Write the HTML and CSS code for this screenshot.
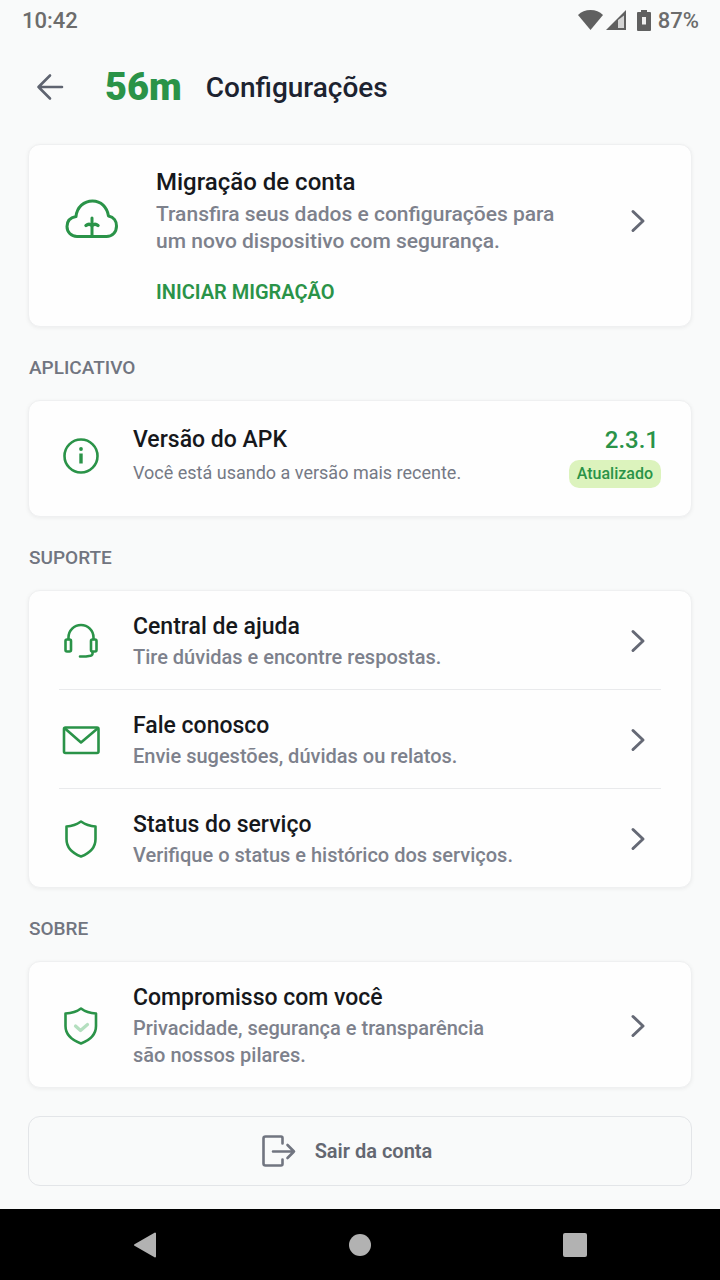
FILE: index.html
```html
<!DOCTYPE html>
<html lang="pt-BR">
<head>
    <meta charset="UTF-8" />
    <meta name="viewport" content="width=device-width, initial-scale=1.0" />
    <title>56m - Configurações</title>
    <link rel="stylesheet" href="styles.css">
</head>
<body>
    <div class="status-bar">
        <span>10:42</span>
        <div class="status-icons">
            <svg class="wifi" width="25" height="20" viewBox="0 0 25 20"><path d="M12.5 20L0 5Q5 0 12.5 0T25 5Z" fill="#606060"/></svg>
            <svg class="signal" width="20" height="20" viewBox="0 0 20 20"><path d="M0 20L20 0V20Z" fill="#606060"/><path d="M12 10L18 5.500V18H12Z" fill="#d4d4d4"/></svg>
            <svg class="battery" width="14" height="21" viewBox="0 0 14 21"><path d="M4 0H10V2H13Q14 2 14 3V20Q14 21 13 21H1Q0 21 0 20V3Q0 2 1 2H4Z" fill="#606060"/><path d="M5 7H9V14.500H5Z" fill="#f0f0f0"/></svg>
            <span>87%</span>
        </div>
    </div>

    <header>
        <a class="back" href="#" aria-label="Voltar">
            <svg width="28" height="28" viewBox="0 0 28 28" fill="none" stroke="#5f6470" stroke-width="2.600" stroke-linecap="round" stroke-linejoin="round"><path d="M26 14H2.500M14 2.500L2.500 14L14 25.500"/></svg>
        </a>
        <span class="logo">56m</span>
        <h1>Configurações</h1>
    </header>

    <main>
        <!-- Account migration -->
        <section class="card migration">
            <svg class="cloud" width="68" height="52" viewBox="0 0 68 52" fill="none" stroke="#2a9348" stroke-width="3" stroke-linecap="round" stroke-linejoin="round">
                <path d="M18 43.500C12 43.500 8 39 8 33.500C8 28 11.500 24.500 17 23.500C18 14 25 8 33.500 8C42 8 48 14 49.500 23C55 24 57.500 28.500 57.500 33C57.500 39 53.500 43.500 47.500 43.500Z"/>
                <path d="M33 25V43"/>
                <path d="M27 32.500Q30 30 33 32.500Q36 30 39 32.500" stroke-width="3.400"/>
            </svg>
            <div class="text">
                <h2>Migração de conta</h2>
                <p>Transfira seus dados e configurações para um novo dispositivo com segurança.</p>
                <button type="button" class="start">INICIAR MIGRAÇÃO</button>
            </div>
            <a class="open" href="#" aria-label="Abrir migração de conta">
                <svg class="chevron" width="24" height="24" viewBox="0 0 24 24"><path d="M7 2.500L17 12L7 21.500"/></svg>
            </a>
        </section>

        <h3>APLICATIVO</h3>
        <section class="card version">
            <svg class="icon" width="44" height="44" viewBox="0 0 44 44"><circle cx="22" cy="22" r="16.500"/><path d="M22 19.500V29.500" stroke-width="3.400" stroke-linecap="butt"/><circle cx="22" cy="15" r="1.900" fill="#2a9348" stroke="none"/></svg>
            <div class="text">
                <h2>Versão do APK</h2>
                <p>Você está usando a versão mais recente.</p>
            </div>
            <div class="release">
                <strong>2.3.1</strong>
                <span class="badge">Atualizado</span>
            </div>
        </section>

        <h3>SUPORTE</h3>
        <section class="card">
            <a class="row" href="#">
                <svg class="icon" width="44" height="44" viewBox="0 0 44 44"><path d="M9.500 20V18.500A12.500 12.500 0 0 1 34.500 18.500V20M33.500 33V35Q33 37 30 37L27 37.500H21"/><rect x="6.500" y="20.500" width="5.500" height="12" rx="1.500"/><rect x="32" y="20.500" width="5.500" height="12" rx="1.500"/></svg>
                <div class="text">
                    <h2>Central de ajuda</h2>
                    <p>Tire dúvidas e encontre respostas.</p>
                </div>
                <svg class="chevron" width="24" height="24" viewBox="0 0 24 24"><path d="M7 2.500L17 12L7 21.500"/></svg>
            </a>
            <a class="row" href="#">
                <svg class="icon" width="44" height="44" viewBox="0 0 44 44"><rect x="5" y="9.500" width="34.500" height="25.500" rx="1.500"/><path d="M6 10.500L22 24.500L38.500 10.500"/></svg>
                <div class="text">
                    <h2>Fale conosco</h2>
                    <p>Envie sugestões, dúvidas ou relatos.</p>
                </div>
                <svg class="chevron" width="24" height="24" viewBox="0 0 24 24"><path d="M7 2.500L17 12L7 21.500"/></svg>
            </a>
            <a class="row" href="#">
                <svg class="icon" width="44" height="44" viewBox="0 0 44 44"><path d="M22 4.500Q28.500 9 36.500 9.500V22C36.500 31 30 36.500 22 39.500C14 36.500 7.500 31 7.500 22V9.500Q15.500 9 22 4.500Z"/></svg>
                <div class="text">
                    <h2>Status do serviço</h2>
                    <p>Verifique o status e histórico dos serviços.</p>
                </div>
                <svg class="chevron" width="24" height="24" viewBox="0 0 24 24"><path d="M7 2.500L17 12L7 21.500"/></svg>
            </a>
        </section>

        <h3>SOBRE</h3>
        <section class="card">
            <a class="row" href="#">
                <svg class="icon" width="44" height="44" viewBox="0 0 44 44"><path d="M22 4.500Q28 9 37 9.500V22C37 31 30 36.500 22 39.500C14 36.500 6.500 31 6.500 22V9.500Q16 9 22 4.500Z"/><path d="M16.500 22L21.500 26.500L28.500 20.500" stroke="#b4dfbf" stroke-width="3.200"/></svg>
                <div class="text about">
                    <h2>Compromisso com você</h2>
                    <p>Privacidade, segurança e transparência são nossos pilares.</p>
                </div>
                <svg class="chevron" width="24" height="24" viewBox="0 0 24 24"><path d="M7 2.500L17 12L7 21.500"/></svg>
            </a>
        </section>

        <button type="button" class="logout">
            <svg width="34" height="32" viewBox="0 0 34 32" fill="none" stroke="#717580" stroke-width="2.600" stroke-linecap="round" stroke-linejoin="round"><path d="M20.500 8.500V3Q20.500 1.500 19 1.500H3.500Q1.500 1.500 1.500 3.500V28.500Q1.500 30.500 3.500 30.500H19Q20.500 30.500 20.500 29V24.500M11 16.500H32M25.500 10L32 16.500L25.500 23"/></svg>
            Sair da conta
        </button>
    </main>

    <nav>
        <button type="button" aria-label="Voltar"><svg width="24" height="26" viewBox="0 0 24 26"><path d="M22 1.500V24.500L2 13Z" fill="#b2b2b2" stroke="#b2b2b2" stroke-width="2" stroke-linejoin="round"/></svg></button>
        <button type="button" aria-label="Início"><svg width="24" height="24" viewBox="0 0 24 24"><circle cx="12" cy="12" r="11" fill="#b2b2b2"/></svg></button>
        <button type="button" aria-label="Recentes"><svg width="24" height="24" viewBox="0 0 24 24"><rect width="24" height="24" rx="2" fill="#b2b2b2"/></svg></button>
    </nav>
</body>
</html>
```

FILE: styles.css
```css
/* General Reset */
* {
    box-sizing: border-box;
    margin: 0;
    padding: 0;
}
body {
    display: flex;
    flex-direction: column;
    min-height: 100vh;
    font-family: 'Roboto', sans-serif;
    background-color: #f9fafa;
    color: #16181c;
}
svg {
    display: block;
    flex-shrink: 0;
}
button {
    border: none;
    background: none;
    font-family: inherit;
    cursor: pointer;
}
a {
    color: inherit;
    text-decoration: none;
}

/* Status bar */
.status-bar {
    display: flex;
    justify-content: space-between;
    align-items: center;
    height: 40px;
    padding: 0 21px 0 22px;
    font-size: 22px;
    font-weight: 500;
    color: #6c6c6c;
}
.status-icons {
    display: flex;
    align-items: center;
}
.signal {
    margin-left: 3px;
}
.battery {
    margin: 0 7px 0 11px;
}

/* Header */
header {
    display: flex;
    align-items: center;
    height: 94px;
    padding: 0 36px;
}
.logo {
    margin: 0 24px 0 41px;
    font-size: 38px;
    font-weight: 900;
    color: #2a9348;
}
h1 {
    font-size: 28px;
    font-weight: 500;
    color: #1d2330;
}

/* Cards */
main {
    padding: 10px 28px 22px;
}
.card {
    padding: 0 30px;
    background-color: #fefefe;
    border: 1px solid #eff0f1;
    border-radius: 12px;
    box-shadow: 0 1px 4px rgba(0, 0, 0, 0.06);
}
.text {
    flex: 1;
}
h2 {
    font-size: 23px;
    line-height: 32px;
    font-weight: 500;
}
.text p {
    margin-top: 1px;
    font-size: 20px;
    line-height: 27px;
    font-weight: 500;
    color: #7d818c;
}
h3 {
    margin: 27px 1px 18px;
    font-size: 19px;
    line-height: 28px;
    font-weight: 500;
    color: #717580;
}
.icon {
    margin-right: 30px;
    fill: none;
    stroke: #2a9348;
    stroke-width: 2.6;
    stroke-linecap: round;
    stroke-linejoin: round;
}
.chevron {
    margin: 0 11px 0 30px;
    fill: none;
    stroke: #656975;
    stroke-width: 3;
    stroke-linecap: round;
    stroke-linejoin: round;
}

.migration {
    display: flex;
    padding-top: 21px;
    padding-bottom: 20px;
}
.migration h2 {
    font-size: 24px;
}
.migration .text p {
    max-width: 410px;
    margin-top: 3px;
    font-size: 21px;
}
.cloud {
    margin: 27px 29px 0 0;
}
.start {
    display: block;
    margin-top: 24px;
    font-size: 20px;
    line-height: 27px;
    font-weight: 600;
    color: #2a9348;
}
.open {
    margin-top: 43px;
}

.version {
    display: flex;
    align-items: center;
    padding-top: 23px;
    padding-bottom: 28px;
}
.version .text {
    align-self: flex-start;
}
.version .text p {
    margin-top: 3px;
    font-size: 18px;
    font-weight: 400;
    color: #757985;
}
.release {
    display: flex;
    flex-direction: column;
    align-items: flex-end;
}
.release strong {
    margin-right: 2px;
    font-size: 24px;
    line-height: 32px;
    font-weight: 500;
    color: #2a9348;
}
.badge {
    margin-top: 4px;
    padding: 0 8px;
    border-radius: 10px;
    background-color: #dcf3bd;
    font-size: 16px;
    line-height: 28px;
    font-weight: 500;
    color: #2a9348;
}

.row {
    display: flex;
    align-items: center;
    padding: 20px 0 18px;
}
.row + .row {
    border-top: 1px solid #e9eaec;
}
.about {
    max-width: 375px;
}
.about + .chevron {
    margin-left: auto;
}

.logout {
    display: flex;
    align-items: center;
    justify-content: center;
    gap: 19px;
    width: 100%;
    height: 70px;
    margin-top: 28px;
    padding-right: 26px;
    border: 1px solid #e3e5e8;
    border-radius: 12px;
    font-size: 20px;
    font-weight: 600;
    color: #636771;
}

/* Navigation bar */
nav {
    display: flex;
    justify-content: space-around;
    align-items: center;
    height: 71px;
    margin-top: auto;
    padding: 0 37px;
    background-color: #000;
}
```
